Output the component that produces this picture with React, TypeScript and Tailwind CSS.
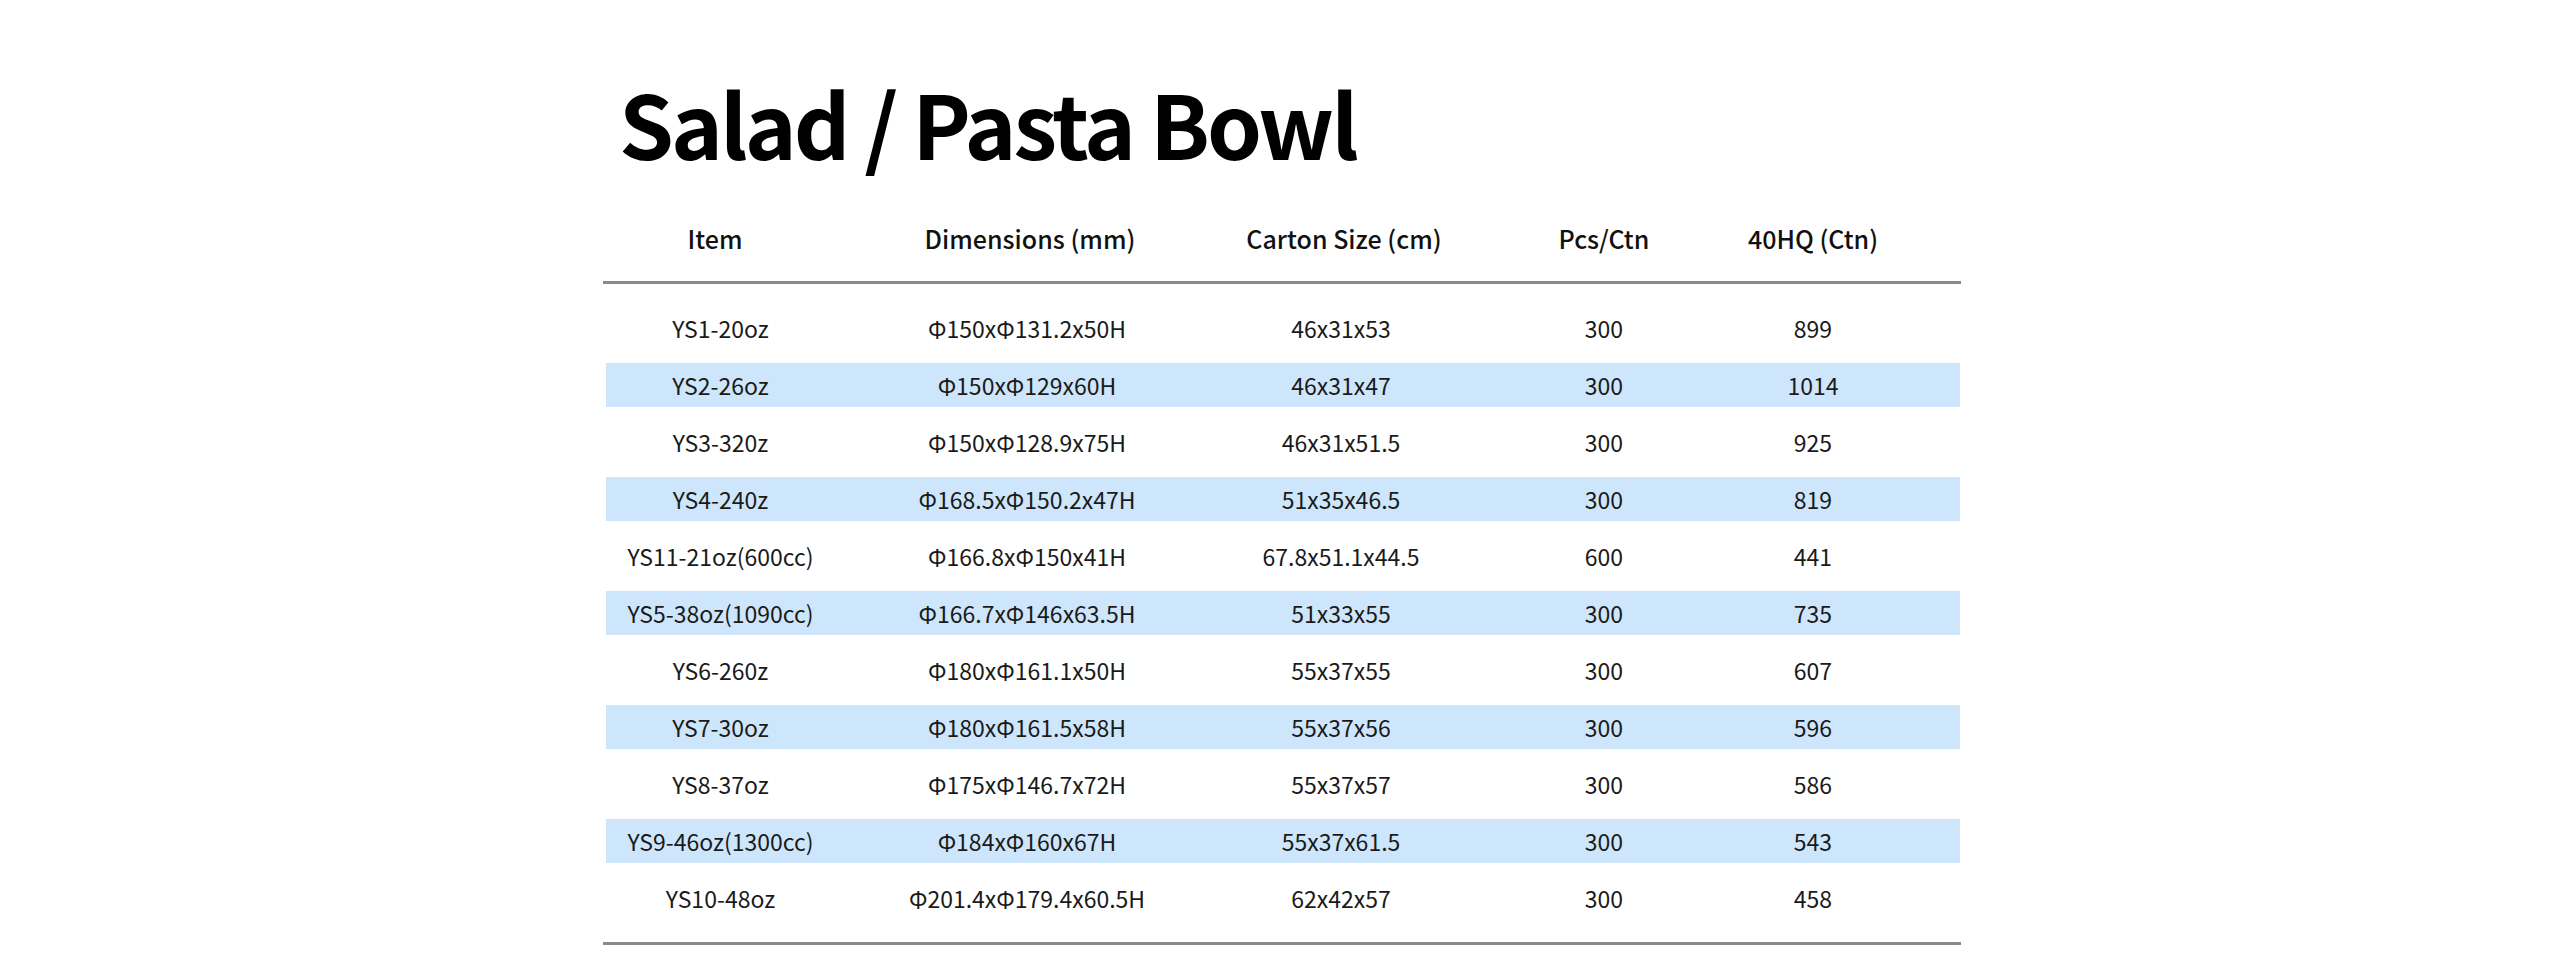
const rows = [
  ["YS1-20oz", "Φ150xΦ131.2x50H", "46x31x53", "300", "899"],
  ["YS2-26oz", "Φ150xΦ129x60H", "46x31x47", "300", "1014"],
  ["YS3-320z", "Φ150xΦ128.9x75H", "46x31x51.5", "300", "925"],
  ["YS4-240z", "Φ168.5xΦ150.2x47H", "51x35x46.5", "300", "819"],
  ["YS11-21oz(600cc)", "Φ166.8xΦ150x41H", "67.8x51.1x44.5", "600", "441"],
  ["YS5-38oz(1090cc)", "Φ166.7xΦ146x63.5H", "51x33x55", "300", "735"],
  ["YS6-260z", "Φ180xΦ161.1x50H", "55x37x55", "300", "607"],
  ["YS7-30oz", "Φ180xΦ161.5x58H", "55x37x56", "300", "596"],
  ["YS8-37oz", "Φ175xΦ146.7x72H", "55x37x57", "300", "586"],
  ["YS9-46oz(1300cc)", "Φ184xΦ160x67H", "55x37x61.5", "300", "543"],
  ["YS10-48oz", "Φ201.4xΦ179.4x60.5H", "62x42x57", "300", "458"],
];

const headers = ["Item", "Dimensions (mm)", "Carton Size (cm)", "Pcs/Ctn", "40HQ (Ctn)"];

const App = () => {
  return (
    <div className="min-h-screen bg-white font-['Noto_Sans_CJK_SC',sans-serif] text-black">
      <div className="ml-[603px] w-[1358px] pt-[78px]">
        <h1 className="pl-[16px] text-[88px] font-bold leading-none tracking-[-3px]">Salad / Pasta Bowl</h1>

        <div className="mt-[29px] grid h-[89px] grid-cols-[224px_406px_222px_298px_120px_1fr] items-center border-b-[3px] border-[#8a8a8a] text-[25px] font-medium text-[#111]">
          {headers.map((h) => (
            <div key={h} className="flex justify-center whitespace-nowrap leading-none">
              {h}
            </div>
          ))}
        </div>

        <div className="border-b-[3px] border-[#8a8a8a] py-[15.5px]">
          {rows.map((r, i) => (
            <div key={r[0]} className="py-[6.5px]">
              <div
                className={`ml-[3px] mr-[1px] grid h-[44px] grid-cols-[229px_384px_244px_282px_136px_1fr] items-center text-[23px] text-[#1a1a1a] ${
                  i % 2 === 1 ? "bg-[#cee6fb]" : ""
                }`}
              >
                {r.map((c, j) => (
                  <div key={j} className="flex justify-center whitespace-nowrap leading-none">
                    {c}
                  </div>
                ))}
              </div>
            </div>
          ))}
        </div>
      </div>
    </div>
  );
};

export default App;
